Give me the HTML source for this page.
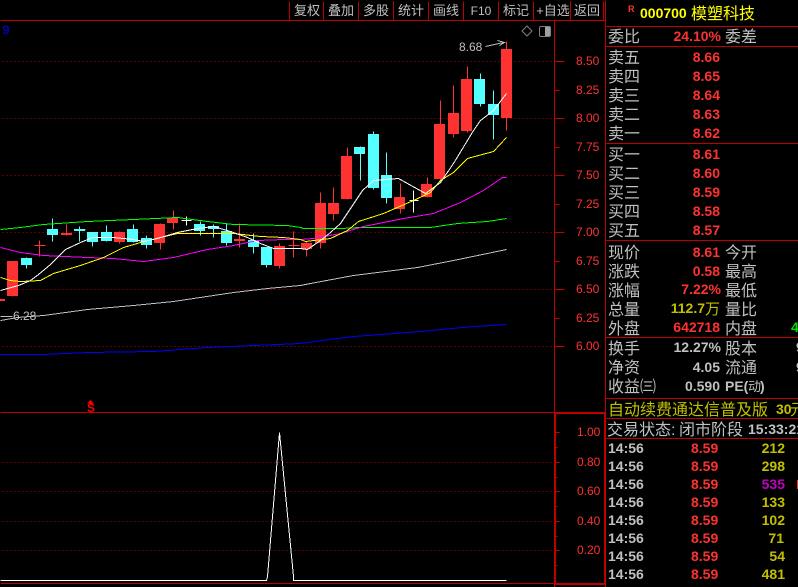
<!DOCTYPE html>
<html><head><meta charset="utf-8"><style>
html,body{margin:0;padding:0;background:#000;overflow:hidden}
svg{display:block}
text{font-family:"Liberation Sans","Noto Sans CJK SC",sans-serif}
.t{font-size:13px;fill:#c0c0c0;text-anchor:middle}
.c{font-size:16px;fill:#c0c0c0;font-family:"WenQuanYi Zen Hei","Noto Sans CJK SC",sans-serif}
.b{font-size:14px;font-weight:bold;fill:#ff3232;text-anchor:end}
.g{fill:#c0c0c0}
.y{fill:#c0c000}
.a{font-size:12px;fill:#ff3232}
.ln{fill:none;stroke-width:1;shape-rendering:crispEdges}
</style></head><body>
<svg width="798" height="587" viewBox="0 0 798 587" xmlns="http://www.w3.org/2000/svg">
<rect width="798" height="587" fill="#000"/>

<g transform="translate(.5,.5)" class="ln" stroke="#c00000">
<path d="M0 20H605M289 1V20M323 1V20M358 1V20M393 1V20M428 1V20M463 1V20M498 1V20M533 1V20M570 1V20M603 1V20"/>
<path d="M554 20V587M605 0V587M0 412H605M0 583H605M554 413H605M605 26H798M605 46H798M605 143H798M605 240H798M605 337H798M605 398H798M605 418H798M605 438H798"/>
<path d="M555 413V583M604 413V583M554 584H605"/>
<path stroke-dasharray="1 3" d="M2 61H554M2 118H554M2 175H554M2 232H554M2 289H554M2 346H554M2 462H554M2 491H554M2 521H554M2 550H554"/>
<path d="M554 61H564M554 118H564M554 175H564M554 232H564M554 289H564M554 346H564M554 90H559M554 147H559M554 204H559M554 261H559M554 318H559M554 432H559M554 447H557M554 462H559M554 477H557M554 491H559M554 506H557M554 521H559M554 536H557M554 550H559M554 565H557"/>
</g>

<text class="t" x="307" y="15">复权</text><text class="t" x="341" y="15">叠加</text><text class="t" x="376" y="15">多股</text><text class="t" x="411" y="15">统计</text><text class="t" x="446" y="15">画线</text><text class="t" x="481" y="15" style="font-size:12px">F10</text><text class="t" x="516" y="15">标记</text><text class="t" x="553" y="15">+自选</text><text class="t" x="587" y="15">返回</text>

<text x="2" y="34" style="font-size:13px;fill:#0000ff;font-family:'Liberation Mono',monospace">9</text>

<path d="M527 26L532 31L527 36L522 31Z" fill="none" stroke="#808080"/>
<rect x="539.5" y="26.5" width="11" height="10" rx="1.5" fill="none" stroke="#808080"/>
<rect x="545" y="27" width="5" height="9" fill="#a0a0a0"/>

<g class="a">
<text x="576" y="65">8.50</text><text x="576" y="94">8.25</text><text x="576" y="122">8.00</text><text x="576" y="151">7.75</text><text x="576" y="179">7.50</text><text x="576" y="208">7.25</text><text x="576" y="236">7.00</text><text x="576" y="265">6.75</text><text x="576" y="293">6.50</text><text x="576" y="322">6.25</text><text x="576" y="350">6.00</text>
<text x="577" y="436">1.00</text><text x="577" y="466">0.80</text><text x="577" y="495">0.60</text><text x="577" y="525">0.40</text><text x="577" y="554">0.20</text>
</g>

<!-- wicks -->
<g transform="translate(.5,.5)" class="ln">
<path stroke="#ff3232" d="M39 240V256M34 245H45M66 224V235M239 223V247M279 243V268M293 231V257M288 245H299M306 241V256M320 192V248M333 187V220M347 147V199M400 183V213M427 177V197M440 100V179M453 85V137M467 66V132M506 41V130M119 231V243M160 223V249M173 210V229M12 261V296"/>
<path stroke="#54ffff" d="M26 257V268M52 218V241M79 226V241M74 229H85M92 232V246M106 225V241M133 224V242M146 235V248M200 221V235M213 224V237M226 223V245M253 233V253M266 247V267M360 146V180M373 131V189M386 152V203M480 73V106M493 90V139"/>
<path stroke="#ffffff" d="M186 216V225M181 220H191M413 190V212M409 200H418"/>
</g>
<!-- bodies -->
<path fill="#ff3232" d="M0 299h5v2H0zM7 261h11v35H7zM61 233h11v2H61zM114 232h11v10h-11zM154 224h11v19h-11zM167 218h11v5h-11zM234 239h11v2h-11zM274 246h11v20h-11zM301 243h11v6h-11zM315 203h11v40h-11zM328 203h11v11h-11zM341 156h11v43h-11zM394 197h11v12h-11zM421 184h11v13h-11zM434 124h11v55h-11zM448 113h11v21h-11zM461 79h11v52h-11zM501 49h11v69h-11z"/>
<path fill="#54ffff" d="M21 258h11v7H21zM47 229h11v6H47zM74 229h11v2H74zM87 232h11v10H87zM101 232h11v9h-11zM127 229h11v13h-11zM141 238h11v7h-11zM194 224h11v7h-11zM208 226h11v3h-11zM221 231h11v12h-11zM248 240h11v7h-11zM261 247h11v18h-11zM354 147h11v7h-11zM368 134h11v54h-11zM381 175h11v23h-11zM474 79h11v25h-11zM488 104h11v11h-11z"/>

<!-- moving averages -->
<g transform="translate(.5,.5)" class="ln">
<polyline stroke="#0000ff" points="0,354 43,354 87,352 153,351 207,347 253,345 300,343 313,341 353,336 420,331 473,326 506,324"/>
<polyline stroke="#c0c0c0" points="0,320 17,317 43,315 87,309 133,305 173,301 233,292 267,288 300,285 310,283 353,275 417,267 453,260 506,249"/>
<polyline stroke="#00ff00" points="0,229 20,227 43,224 87,221 133,219 177,217 207,221 233,224 287,225 300,227 303,228 340,228 360,227 430,227 457,223 487,221 506,218"/>
<polyline stroke="#ff00ff" points="0,247 20,252 43,255 87,257 113,258 143,261 173,257 207,249 233,245 257,240 283,239 300,239 313,238 340,233 363,226 403,218 433,213 460,202 483,190 502,177 506,177"/>
<polyline stroke="#ffff00" points="0,277 10,280 20,281 40,280 53,273 80,265 103,257 123,247 140,242 160,237 177,233 233,233 260,236 283,237 300,239 305,241 330,238 347,230 358,221 383,213 413,200 430,192 440,180 453,172 467,158 493,151 506,137"/>
<polyline stroke="#ffffff" points="0,290 18,285 30,280 38,274 50,264 65,249 80,242 92,237 113,237 133,239 143,241 157,238 177,232 197,228 213,226 230,231 247,237 260,243 273,248 300,248 307,249 320,240 330,232 340,223 362,190 373,180 398,178 425,193 440,182 453,163 473,130 480,120 493,110 506,93"/>
<polyline stroke="#ffffff" points="0,580 266,580 267,576 279,432 293,576 293,580 506,580"/>
<path stroke="#c0c0c0" d="M485 46L503 42M497 40L504 42L499 45M0 316H12"/>
</g>
<text x="459" y="51" style="font-size:12px;fill:#c0c0c0">8.68</text>
<text x="13" y="320" style="font-size:12px;fill:#c0c0c0">6.28</text>

<path d="M90.500 400L94 403.500H87Z" fill="#ff0000"/>
<text x="87" y="412" style="font-size:12px;font-weight:bold;fill:#ff0000">S</text>

<!-- quote panel -->
<text x="628" y="12" style="font-size:9px;font-weight:bold;fill:#ff3232">R</text>
<text x="640" y="18" style="font-size:14px;font-weight:bold;fill:#ffff00">000700</text>
<text class="c" x="691" y="19" style="font-size:16px;fill:#ffff00">模塑科技</text>

<g class="c">
<text x="608" y="42">委比</text><text x="725" y="42">委差</text>
<text x="608" y="63">卖五</text><text x="608" y="82">卖四</text><text x="608" y="101">卖三</text><text x="608" y="120">卖二</text><text x="608" y="139">卖一</text>
<text x="608" y="160">买一</text><text x="608" y="179">买二</text><text x="608" y="198">买三</text><text x="608" y="217">买四</text><text x="608" y="236">买五</text>
<text x="608" y="258">现价</text><text x="608" y="277">涨跌</text><text x="608" y="296">涨幅</text><text x="608" y="315">总量</text><text x="608" y="334">外盘</text>
<text x="725" y="258">今开</text><text x="725" y="277">最高</text><text x="725" y="296">最低</text><text x="725" y="315">量比</text><text x="725" y="334">内盘</text>
<text x="608" y="354">换手</text><text x="608" y="373">净资</text><text x="608" y="392">收益㈢</text>
<text x="725" y="354">股本</text><text x="725" y="373">流通</text>
<text x="607" y="435">交易状态:</text><text x="679" y="435">闭市阶段</text>
<text x="608" y="415" style="fill:#c0c000">自动续费通达信普及版</text>
<text x="790" y="415" style="fill:#c0c000">元</text>
</g>

<g class="b">
<text x="721" y="41">24.10%</text>
<text x="720" y="62">8.66</text><text x="720" y="81">8.65</text><text x="720" y="100">8.64</text><text x="720" y="119">8.63</text><text x="720" y="138">8.62</text>
<text x="720" y="159">8.61</text><text x="720" y="178">8.60</text><text x="720" y="197">8.59</text><text x="720" y="216">8.58</text><text x="720" y="235">8.57</text>
<text x="720" y="257">8.61</text><text x="720" y="276">0.58</text><text x="721" y="294">7.22%</text><text x="720" y="332">642718</text>
<text x="705" y="313" style="fill:#c0c000">112.7</text>
<text x="721" y="352" style="fill:#c0c0c0">12.27%</text><text x="720" y="372" style="fill:#c0c0c0">4.05</text><text x="720" y="391" style="fill:#c0c0c0">0.590</text>
</g>
<text class="c" x="705" y="314" style="fill:#c0c000;font-size:15px">万</text>
<text x="725" y="391" style="font-size:14px;font-weight:bold;fill:#c0c0c0">PE(</text>
<text class="c" x="748" y="391" style="font-size:13px">动</text>
<text x="760" y="391" style="font-size:14px;font-weight:bold;fill:#c0c0c0">)</text>
<text x="791" y="332" style="font-size:14px;font-weight:bold;fill:#00e000">4</text>
<text x="796" y="352" style="font-size:14px;font-weight:bold;fill:#c0c0c0">9</text>
<text x="796" y="372" style="font-size:14px;font-weight:bold;fill:#c0c0c0">9</text>
<text x="776" y="414" style="font-size:14px;font-weight:bold;fill:#c0c000">30</text>
<text x="748" y="434" style="font-size:14px;font-weight:bold;fill:#c0c0c0">15:33:21</text>

<g style="font-size:14px;font-weight:bold">
<g fill="#c0c0c0">
<text x="608" y="453">14:56</text><text x="608" y="471">14:56</text><text x="608" y="489">14:56</text><text x="608" y="507">14:56</text><text x="608" y="525">14:56</text><text x="608" y="543">14:56</text><text x="608" y="561">14:56</text><text x="608" y="579">14:56</text>
</g>
<g fill="#ff3232">
<text x="691" y="453">8.59</text><text x="691" y="471">8.59</text><text x="691" y="489">8.59</text><text x="691" y="507">8.59</text><text x="691" y="525">8.59</text><text x="691" y="543">8.59</text><text x="691" y="561">8.59</text><text x="691" y="579">8.59</text>
</g>
<g fill="#c0c000" text-anchor="end">
<text x="785" y="453">212</text><text x="785" y="471">298</text><text x="785" y="489" fill="#c000c0">535</text><text x="785" y="507">133</text><text x="785" y="525">102</text><text x="784" y="543">71</text><text x="785" y="561">54</text><text x="785" y="579">481</text>
</g>
</g>
<rect x="797" y="480" width="1" height="9" fill="#ff3232"/>
</svg>
</body></html>
